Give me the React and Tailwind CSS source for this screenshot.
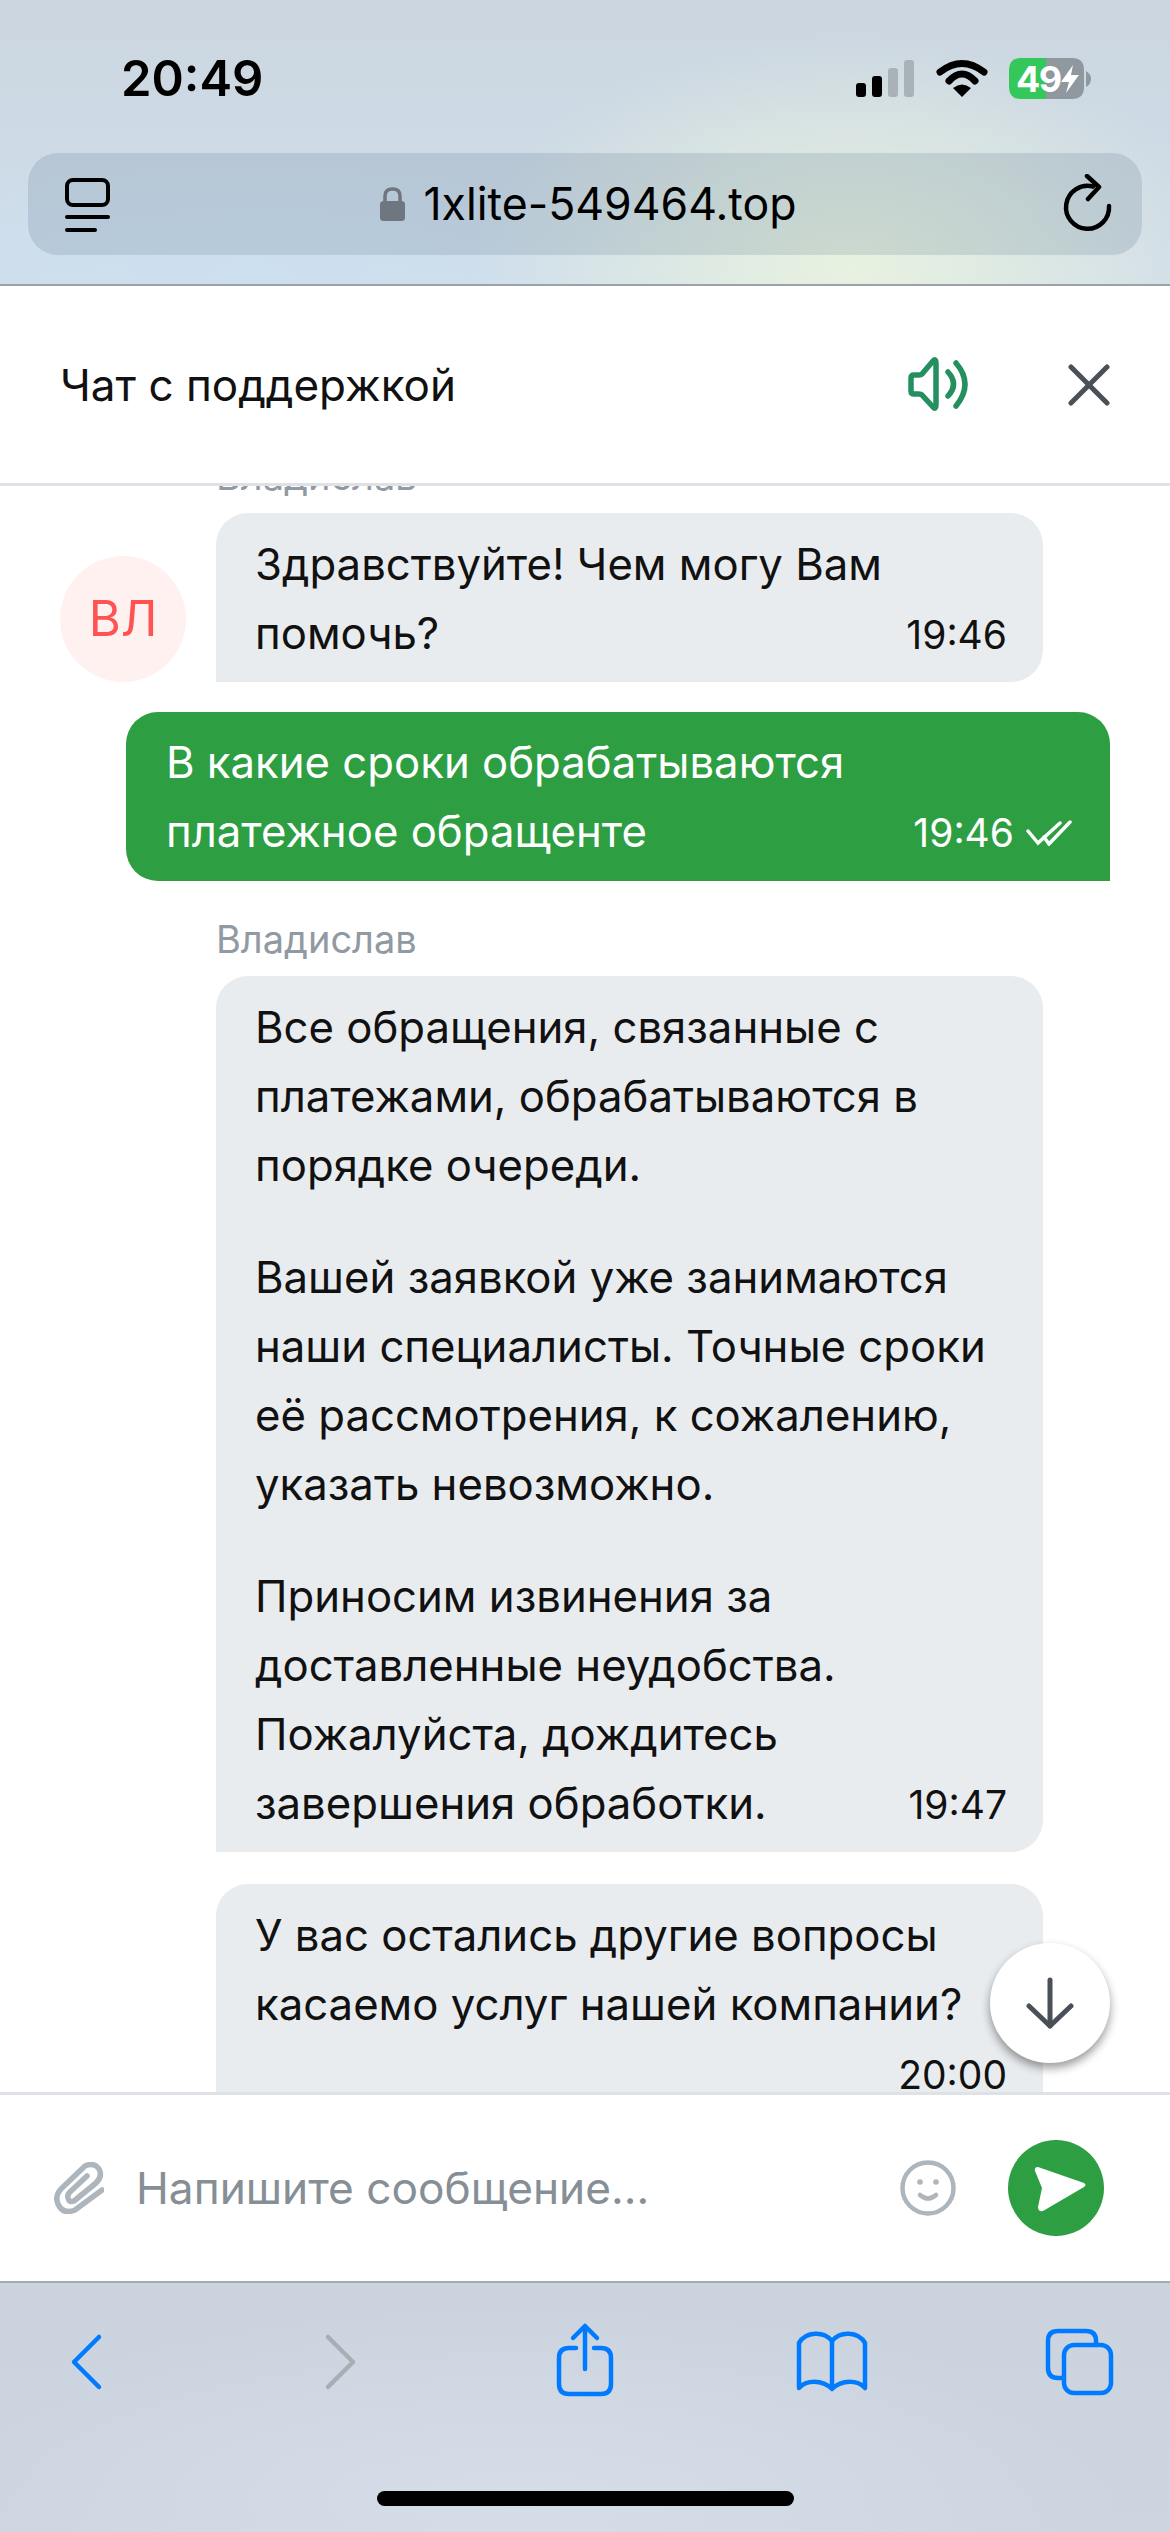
const I = "[font-family:Inter,'Liberation_Sans',sans-serif]";

function Line({ children, time, check }) {
  return (
    <div className="flex items-baseline justify-between">
      <span>{children}</span>
      {time && (
        <span className="flex items-center gap-[12px] text-[39px] leading-none">
          {time}
          {check && (
            <svg width="46" height="26" viewBox="1027 818 46 26" fill="none" stroke="currentColor" strokeWidth="3.500" strokeLinecap="round">
              <path d="M1029 829 L1039 841 L1061 821" />
              <path d="M1045 835 L1050 842 L1071 820" />
            </svg>
          )}
        </span>
      )}
    </div>
  );
}

function Bubble({ children, className = "" }) {
  return (
    <div className={`w-[827px] rounded-[32px] rounded-bl-none bg-[#e9ecef] pt-[17px] pb-[14px] pl-[39px] pr-[36px] text-[43.7px] leading-[69px] text-[#111] ${className}`}>
      {children}
    </div>
  );
}

function Name() {
  return <div className="ml-[156px] mb-[13px] h-[48px] text-[38px] leading-[48px] text-[#919aa2]">Владислав</div>;
}

export default function App() {
  return (
    <div className={`flex h-[2532px] w-[1170px] flex-col overflow-hidden bg-white ${I}`}>
      {/* Safari top */}
      <div className="h-[286px] shrink-0 border-b-2 border-[#9aa3ab] bg-[radial-gradient(ellipse_380px_230px_at_850px_265px,#e8f2e0_0%,rgba(232,242,224,0)_100%),radial-gradient(ellipse_500px_150px_at_250px_270px,#cde0f0_0%,rgba(205,224,240,0)_100%),linear-gradient(180deg,#cbd6e0,#d0dde9)]">
        <div className="flex h-[153px] items-center justify-between pl-[121px] pr-[75px] pt-[4px]">
          <span className="text-[49px] font-semibold leading-none text-black">20:49</span>
          <svg width="245" height="50" viewBox="850 53 245 50" fill="none">
            <rect x="856" y="82" width="10" height="14" rx="3" fill="#000" />
            <rect x="872" y="75" width="10" height="21" rx="3" fill="#000" />
            <rect x="888" y="67" width="10" height="29" rx="3" fill="#a9b2b7" />
            <rect x="904" y="59" width="10" height="37" rx="3" fill="#a9b2b7" />
            <path d="M940 71 Q962 54 984 71" stroke="#000" strokeWidth="7" strokeLinecap="round" />
            <path d="M949 80 Q962 66 975 80" stroke="#000" strokeWidth="7" strokeLinecap="round" />
            <path d="M953 87 Q962 80 971 87 L962 96 Z" fill="#000" />
            <path d="M1046 57 H1072 Q1084 57 1084 69 V86 Q1084 98 1072 98 H1046 Z" fill="#8f979f" />
            <path d="M1046 57 H1021 Q1009 57 1009 69 V86 Q1009 98 1021 98 H1046 Z" fill="#34c759" />
            <path d="M1086 70 Q1091 73 1091 78 Q1091 83 1086 86 Z" fill="#8f979f" />
            <text x="1016" y="91" fontFamily="Inter, sans-serif" fontWeight="700" fontSize="36" letterSpacing="-1.5" fill="#fff">49</text>
            <path d="M1073 64 L1061 81 L1069 81 L1066 92 L1079 74 L1071 74 Z" fill="#fff" />
          </svg>
        </div>
        <div className="mx-[28px] flex h-[102px] items-center justify-between rounded-[30px] bg-[rgba(60,95,120,0.16)] pl-[37px] pr-[30px]">
          <svg width="45" height="56" viewBox="65 176 45 56" fill="none" stroke="#000" strokeWidth="4" strokeLinecap="round">
            <rect x="67" y="180" width="41" height="25" rx="6" />
            <path d="M67 217 H108" />
            <path d="M67 230 H95" />
          </svg>
          <div className="ml-[7px] flex items-center gap-[18px]">
            <svg width="25" height="34" viewBox="0 0 25 34" fill="none">
              <path d="M5 15 V9 Q5 2 12.500 2 Q20 2 20 9 V15" stroke="#6f7680" strokeWidth="3.500" />
              <rect x="0" y="14" width="25" height="20" rx="3.500" fill="#6f7680" />
            </svg>
            <span className="text-[44.6px] leading-none text-black">1xlite-549464.top</span>
          </div>
          <svg width="52" height="60" viewBox="1060 174 52 60" fill="none" stroke="#000" strokeWidth="4.500" strokeLinecap="round" strokeLinejoin="round">
            <path d="M1109 206 A21.500 21.500 0 1 1 1093 186.500" />
            <path d="M1087 176 L1099 187 L1088 199" />
          </svg>
        </div>
      </div>

      {/* Chat header */}
      <div className="flex h-[197px] shrink-0 items-center justify-between pl-[60px] pr-[60px]">
        <span className="text-[44px] leading-none text-[#111]">Чат с поддержкой</span>
        <div className="flex items-center gap-[99px]">
          <svg width="62" height="56" viewBox="908 355 62 56" fill="none" stroke="#25905f" strokeWidth="5.500" strokeLinecap="round" strokeLinejoin="round">
            <path d="M912 376 Q912 373 915 373 H920 Q922 373 923 372 L934 359 Q937 356 937 361 V403 Q937 408 934 405 L923 393 Q922 392 920 392 H915 Q912 392 912 389 Z" />
            <path d="M949 370 Q960 382 949 394" />
            <path d="M957 361 Q975 382 957 404" />
          </svg>
          <svg width="42" height="42" viewBox="1068 362 42 42" fill="none" stroke="#495057" strokeWidth="5" strokeLinecap="round">
            <path d="M1071 365 L1107 401" />
            <path d="M1107 365 L1071 401" />
          </svg>
        </div>
      </div>

      {/* Messages */}
      <div className="relative flex-1 overflow-hidden border-t-[3px] border-[#dee2e6]">
        <div className="-mt-[34px] px-[60px]">
          <Name />
          <div className="flex items-end gap-[30px]">
            <div className="flex h-[126px] w-[126px] shrink-0 items-center justify-center rounded-full bg-[#fff1f0] text-[49px] text-[#ff5252]">ВЛ</div>
            <Bubble>
              <div>Здравствуйте! Чем могу Вам</div>
              <Line time="19:46">помочь?</Line>
            </Bubble>
          </div>
          <div className="ml-[66px] mt-[30px] w-[984px] rounded-[32px] rounded-br-none bg-[#2d9e42] pt-[16px] pb-[15px] pl-[40px] pr-[38px] text-[43.7px] leading-[69px] text-white">
            <div>В какие сроки обрабатываются</div>
            <Line time="19:46" check>платежное обращенте</Line>
          </div>
          <div className="mt-[34px]">
            <Name />
            <Bubble className="ml-[156px]">
              <div className="mb-[43px]">
                Все обращения, связанные с
                <br />
                платежами, обрабатываются в
                <br />
                порядке очереди.
              </div>
              <div className="mb-[43px]">
                Вашей заявкой уже занимаются
                <br />
                наши специалисты. Точные сроки
                <br />
                её рассмотрения, к сожалению,
                <br />
                указать невозможно.
              </div>
              <div>
                Приносим извинения за
                <br />
                доставленные неудобства.
                <br />
                Пожалуйста, дождитесь
              </div>
              <Line time="19:47">завершения обработки.</Line>
            </Bubble>
          </div>
          <Bubble className="ml-[156px] mt-[32px] whitespace-nowrap">
            <div>У вас остались другие вопросы</div>
            <div>касаемо услуг нашей компании?</div>
            <Line time="20:00">&nbsp;</Line>
          </Bubble>
        </div>
        <div className="absolute left-[990px] top-[1457px] flex h-[120px] w-[120px] items-center justify-center rounded-full bg-white shadow-[0_5px_10px_rgba(0,0,0,0.4)]">
          <svg width="48" height="52" viewBox="1026 1971 48 52" fill="none" stroke="#495057" strokeWidth="5" strokeLinecap="round" strokeLinejoin="round">
            <path d="M1050 1974 V2020" />
            <path d="M1029 2000 L1050 2020 L1071 2000" />
          </svg>
        </div>
      </div>

      {/* Input */}
      <div className="flex h-[189px] shrink-0 items-center border-t-[3px] border-[#dee2e6] pl-[54px] pr-[66px]">
        <svg width="50" height="52" viewBox="53 2165 50 52" fill="none" stroke="#adb5bd" strokeWidth="5.500" strokeLinecap="round" strokeLinejoin="round">
          <path d="M101 2193 L74 2213 Q62 2218 57 2207 Q53 2198 62 2190 L84 2169 Q93 2165 98 2172 Q102 2179 95 2186 L73 2204 Q68 2206 67 2201 Q66 2197 70 2194 L86 2179" />
        </svg>
        <span className="ml-[32px] whitespace-nowrap text-[44.2px] leading-none text-[#868e96]">Напишите сообщение...</span>
        <svg className="ml-auto" width="56" height="56" viewBox="899 2164 56 56" fill="none">
          <circle cx="927" cy="2192" r="25.500" stroke="#adb5bd" strokeWidth="4.500" />
          <circle cx="919" cy="2186" r="2.800" fill="#adb5bd" />
          <circle cx="935" cy="2186" r="2.800" fill="#adb5bd" />
          <path d="M919 2199 Q927 2206 935 2199" stroke="#adb5bd" strokeWidth="4.500" strokeLinecap="round" />
        </svg>
        <div className="ml-[52px] flex h-[96px] w-[96px] shrink-0 items-center justify-center rounded-full bg-[#2d9e42]">
          <svg width="96" height="96" viewBox="1008 2141 96 96">
            <path d="M1038 2168 L1084 2184 Q1087 2186 1084 2188 L1043 2212 Q1038 2213 1038 2208 L1042 2189 L1035 2172 Q1034 2168 1038 2168 Z" fill="#fff" />
          </svg>
        </div>
      </div>

      {/* Safari bottom */}
      <div className="h-[251px] shrink-0 border-t-2 border-[#a5abb3] bg-[radial-gradient(ellipse_600px_200px_at_520px_220px,#d5dee8_0%,rgba(213,222,232,0)_100%),linear-gradient(180deg,#cbd4de,#cdd6e0)]">
        <div className="flex gap-[146px] pl-[37px] pt-[35px]">
          <svg width="100" height="90" viewBox="37 2320 100 90" fill="none" stroke="#007aff" strokeWidth="4.500" strokeLinecap="round" strokeLinejoin="round">
            <path d="M99 2339 L74 2364 L99 2389" />
          </svg>
          <svg width="100" height="90" viewBox="283 2320 100 90" fill="none" stroke="#a8aeb4" strokeWidth="4.500" strokeLinecap="round" strokeLinejoin="round">
            <path d="M328 2339 L353 2364 L328 2389" />
          </svg>
          <svg width="100" height="90" viewBox="529 2320 100 90" fill="none" stroke="#007aff" strokeWidth="4.500" strokeLinecap="round" strokeLinejoin="round">
            <path d="M576 2350 H569 Q559 2350 559 2360 V2386 Q559 2396 569 2396 H601 Q611 2396 611 2386 V2360 Q611 2350 601 2350 H594" />
            <path d="M585 2371 V2329" />
            <path d="M573 2340 L585 2328 L597 2340" />
          </svg>
          <svg width="100" height="90" viewBox="775 2320 100 90" fill="none" stroke="#007aff" strokeWidth="4.500" strokeLinecap="round" strokeLinejoin="round">
            <path d="M832 2343 V2390" />
            <path d="M832 2343 C824 2333 806 2333 799 2345 V2390 C806 2382 822 2381 832 2391 C842 2381 858 2382 865 2390 V2345 C858 2333 840 2333 832 2343" />
          </svg>
          <svg width="100" height="90" viewBox="1021 2320 100 90" fill="none" stroke="#007aff" strokeWidth="4.500" strokeLinecap="round" strokeLinejoin="round">
            <path d="M1064 2380 H1058 Q1048 2380 1048 2370 V2343 Q1048 2333 1058 2333 H1086 Q1096 2333 1096 2343 V2347" />
            <rect x="1064" y="2347" width="47" height="48" rx="10" />
          </svg>
        </div>
        <div className="mx-auto mt-[83px] h-[15px] w-[417px] rounded-full bg-black" />
      </div>
    </div>
  );
}
